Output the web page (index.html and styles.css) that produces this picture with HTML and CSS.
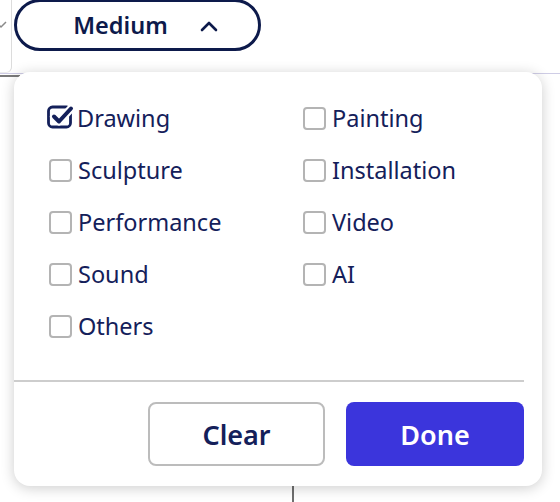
FILE: index.html
```html
<!DOCTYPE html>
<html>
<head>
    <title>Medium filter</title>
    <meta charset="UTF-8">
    <meta name="viewport" content="width=device-width, initial-scale=1.0">
    <link rel="stylesheet" href="styles.css">
</head>
<body>
    <div class="toolbar">
        <div class="prev-filter">
            <svg class="prev-chevron" width="12" height="10" viewBox="0 0 12 10"><path d="M1 2 L6 7 L11 2" fill="none" stroke="#8a8a8a" stroke-width="1.5"/></svg>
        </div>
        <button class="pill">
            <span>Medium</span>
            <svg width="18" height="11" viewBox="0 0 18 11"><path d="M2 9 L9 2 L16 9" fill="none" stroke="#0d1a4b" stroke-width="2.6" stroke-linecap="round" stroke-linejoin="round"/></svg>
        </button>
    </div>

    <div class="stage">
        <div class="stage-edge"></div>
        <div class="stage-split"></div>
    </div>

    <!-- Menú desplegable de medios -->
    <div class="popup">
        <div class="options">
            <label class="option checked">
                <svg class="box" width="28" height="26" viewBox="0 0 28 26">
                    <rect x="1.5" y="4" width="22" height="20" rx="4" fill="none" stroke="#14205a" stroke-width="2.8"/>
                    <path d="M7 13.5 L12 18.5 L24 5.5" fill="none" stroke="#fff" stroke-width="8" stroke-linecap="round" stroke-linejoin="round"/>
                    <path d="M7 13.5 L12 18.5 L24 5.5" fill="none" stroke="#14205a" stroke-width="4" stroke-linecap="round" stroke-linejoin="round"/>
                </svg>
                Drawing
            </label>
            <label class="option"><span class="box empty"></span>Painting</label>
            <label class="option"><span class="box empty"></span>Sculpture</label>
            <label class="option"><span class="box empty"></span>Installation</label>
            <label class="option"><span class="box empty"></span>Performance</label>
            <label class="option"><span class="box empty"></span>Video</label>
            <label class="option"><span class="box empty"></span>Sound</label>
            <label class="option"><span class="box empty"></span>AI</label>
            <label class="option"><span class="box empty"></span>Others</label>
        </div>
        <hr class="divider">
        <div class="actions">
            <button class="btn btn-clear">Clear</button>
            <button class="btn btn-done">Done</button>
        </div>
    </div>
</body>
</html>
```

FILE: styles.css
```css
body {
    font-family: "Noto Sans", "Open Sans", sans-serif;
    background-color: #fff;
    color: #14205a;
    margin: 0;
    padding: 0;
    width: 560px;
    height: 502px;
    overflow: hidden;
    position: relative;
}

.toolbar {
    display: flex;
    align-items: flex-start;
    height: 73px;
}

.prev-filter {
    width: 11px;
    height: 72px;
    border-right: 1px solid #dcdcdc;
    border-bottom: 1px solid #ececec;
    border-bottom-right-radius: 6px;
    overflow: hidden;
    display: flex;
    align-items: flex-start;
}

.prev-chevron {
    margin-top: 20px;
    margin-left: -5px;
}

.pill {
    margin-left: 2px;
    margin-top: -1px;
    width: 247px;
    height: 52px;
    border: 3px solid #0d1a4b;
    border-radius: 26px;
    background-color: #fff;
    color: #0d1a4b;
    font-family: inherit;
    font-size: 23.5px;
    font-weight: 600;
    display: flex;
    align-items: center;
    justify-content: center;
    gap: 32px;
    padding: 0 0 0 16px;
}

.pill svg {
    margin-top: 2px;
}

.stage {
    border-top: 1px solid #cfcde6;
    height: 428px;
    display: flex;
}

.stage-edge {
    width: 20px;
    height: 2px;
    margin-top: 1px;
    background-color: #7a7a7a;
}

.stage-split {
    margin-left: 272px;
    width: 2px;
    background-color: #6f6f6f;
}

.popup {
    position: absolute;
    top: 72px;
    left: 14px;
    width: 528px;
    height: 414px;
    box-sizing: border-box;
    background-color: #fff;
    border-radius: 16px;
    box-shadow: 0 2px 14px rgba(0,0,0,0.2);
    padding: 20px 18px 20px 0;
}

.options {
    display: grid;
    grid-template-columns: 254px 1fr;
    grid-auto-rows: 52px;
    padding-left: 33px;
}

.option {
    display: flex;
    align-items: center;
    gap: 4px;
    font-size: 23.5px;
    color: #14205a;
}

.box.empty {
    width: 19px;
    height: 19px;
    border: 2px solid #b4b4b4;
    border-radius: 4px;
    margin-left: 2px;
    margin-right: 2px;
}

.checked .box {
    margin-top: -4px;
    margin-right: -2px;
}

.divider {
    border: none;
    border-top: 2px solid #cdcdcd;
    margin: 28px 0 20px 0;
}

.actions {
    display: flex;
    justify-content: flex-end;
    gap: 21px;
}

.btn {
    height: 64px;
    font-family: inherit;
    font-size: 27px;
    font-weight: 600;
    border-radius: 8px;
    cursor: pointer;
}

.btn-clear {
    width: 177px;
    background-color: #fff;
    color: #14205a;
    border: 2px solid #bcbcbc;
}

.btn-done {
    width: 178px;
    background-color: #3b35dc;
    color: #fff;
    border: none;
}
```
